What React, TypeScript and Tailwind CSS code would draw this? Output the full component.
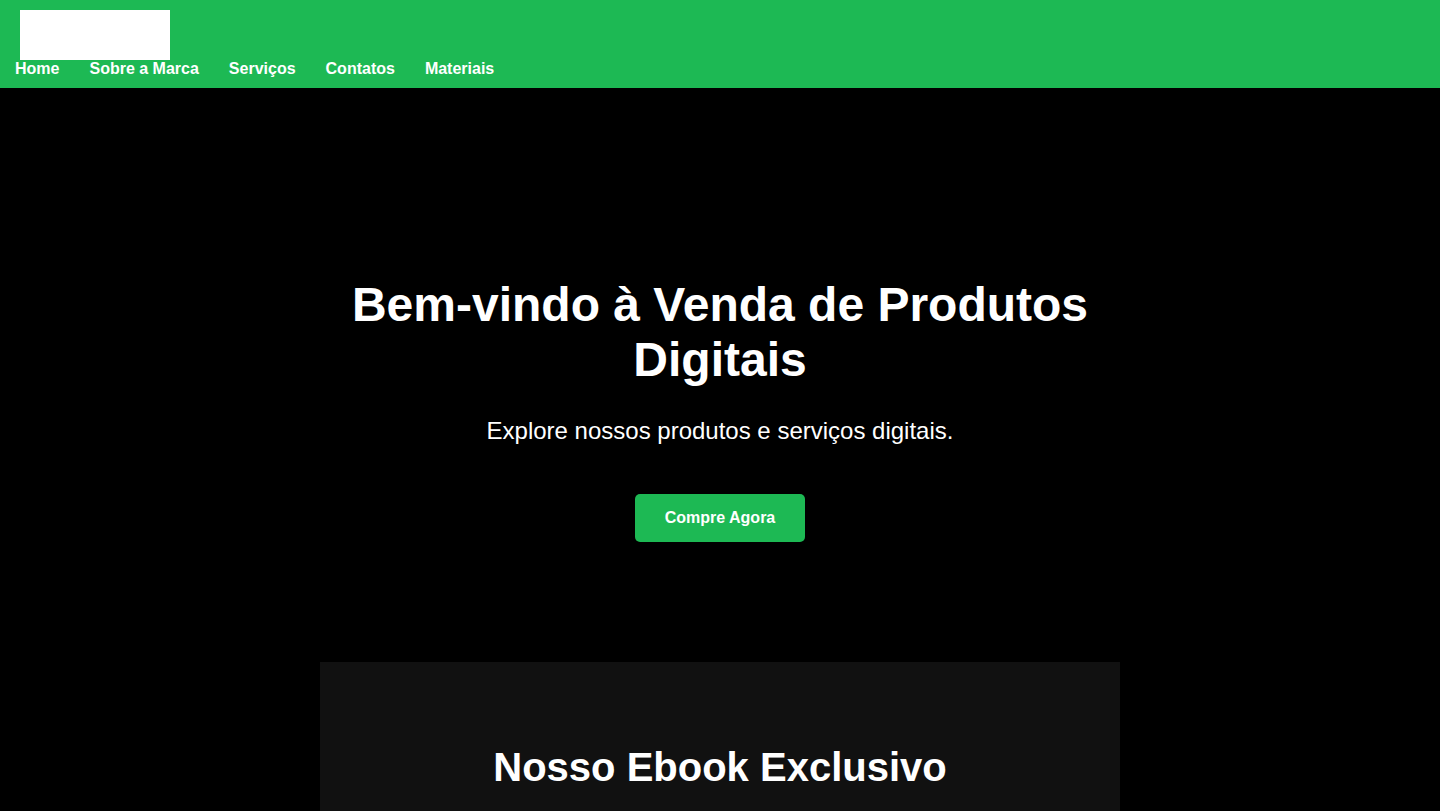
export default function App() {
  const links = ["Home", "Sobre a Marca", "Serviços", "Contatos", "Materiais"];
  return (
    <div className="min-h-screen bg-black text-white font-['Liberation_Sans',Arial,sans-serif]">
      {/* header */}
      <header className="bg-[#1DB954] pt-[10px] pb-[10px]">
        <div className="ml-[20px] h-[50px] w-[150px] bg-white" />
        <nav>
          <ul className="flex gap-[30px] pl-[15px] text-[16px] font-bold leading-[18px]">
            {links.map((l) => (
              <li key={l}>
                <a href="#" className="text-white">
                  {l}
                </a>
              </li>
            ))}
          </ul>
        </nav>
      </header>

      {/* hero */}
      <section className="px-5 pt-[189px] pb-[120px] text-center">
        <h1 className="mx-auto max-w-[800px] text-[48px] font-bold leading-[55px]">
          Bem-vindo à Venda de Produtos Digitais
        </h1>
        <p className="mt-[30px] text-[24px] leading-[28px]">
          Explore nossos produtos e serviços digitais.
        </p>
        <a
          href="#"
          className="mt-[49px] inline-block rounded-[5px] bg-[#1DB954] px-[30px] py-[15px] text-[16px] font-bold leading-[18px] text-white"
        >
          Compre Agora
        </a>
      </section>

      {/* ebook */}
      <section className="mx-auto w-[800px] bg-[#111111] px-5 pt-[82px] pb-[60px] text-center">
        <h2 className="text-[40px] font-bold leading-[46px]">Nosso Ebook Exclusivo</h2>
      </section>
    </div>
  );
}
